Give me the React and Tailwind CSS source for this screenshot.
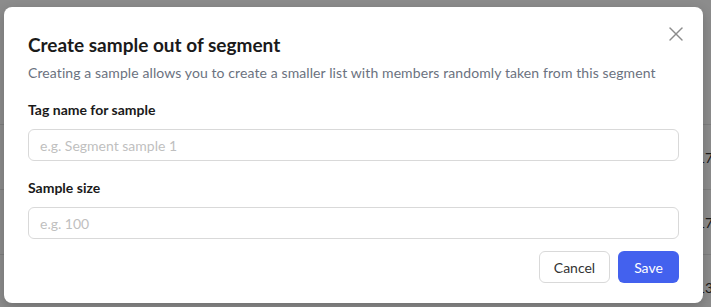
import { X } from 'lucide-react'

const rows = ['', '17:32', '17:28', '13:05']

export default function App() {
  return (
    <div className="relative w-[711px] h-[307px] overflow-hidden bg-white" style={{ fontFamily: 'Lato, "Noto Sans", sans-serif' }}>
      {/* page behind the overlay */}
      <div className="flex flex-col pt-[60px] text-[14px] text-[#333]">
        {rows.map((t, i) => (
          <div key={i} className="h-[65px] border-b border-[#e5e5e5] flex items-center pl-[697px] whitespace-nowrap">
            {t}
          </div>
        ))}
      </div>
      <div className="absolute inset-0 bg-black/45" />

      {/* modal */}
      <div className="absolute left-[4px] top-[7px] w-[699px] bg-white rounded-[8px] shadow-[0_4px_12px_rgba(0,0,0,0.2)] px-6 pt-6 pb-5">
        <button className="absolute right-[15px] top-[15px] text-[#8c8c8c]" aria-label="Close">
          <X size={24} strokeWidth={1.4} />
        </button>
        <h2 className="text-[19px] leading-[28px] font-bold text-[#1a1a1a]">Create sample out of segment</h2>
        <p className="text-[14px] leading-[22px] tracking-[0.1px] text-[#6b7280] mt-[3px]">
          Creating a sample allows you to create a smaller list with members randomly taken from this segment
        </p>

        <label className="block mt-[15px] text-[14px] leading-[22px] font-bold text-[#1a1a1a]">Tag name for sample</label>
        <input
          placeholder="e.g. Segment sample 1"
          className="mt-2 w-full h-[32px] rounded-[6px] border border-[#d9d9d9] px-[11px] text-[14px] placeholder:text-[#bfbfbf] outline-none"
        />

        <label className="block mt-4 text-[14px] leading-[22px] font-bold text-[#1a1a1a]">Sample size</label>
        <input
          placeholder="e.g. 100"
          className="mt-2 w-full h-[32px] rounded-[6px] border border-[#d9d9d9] px-[11px] text-[14px] placeholder:text-[#bfbfbf] outline-none"
        />

        <div className="flex justify-end gap-2 mt-3">
          <button className="h-[32px] w-[71px] rounded-[6px] border border-[#d9d9d9] bg-white text-[14px] text-[#333]">Cancel</button>
          <button className="h-[32px] w-[61px] rounded-[6px] bg-[#4361ee] text-[14px] text-white">Save</button>
        </div>
      </div>
    </div>
  )
}
